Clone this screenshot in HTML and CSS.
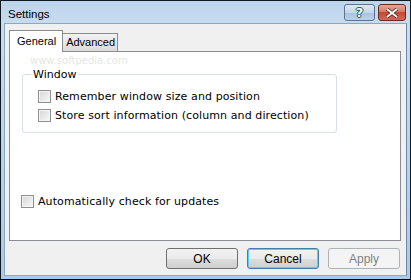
FILE: index.html
```html
<!DOCTYPE html>
<html lang="en">
<head>
    <meta charset="UTF-8">
    <title>Settings</title>
    <link rel="stylesheet" href="styles.css">
</head>
<body>
    <div class="window">
        <div class="titlebar">
            <span class="title">Settings</span>
            <div class="caption-btns">
                <div class="cap-btn help">?</div>
                <div class="cap-btn close">
                    <svg width="14" height="10" viewBox="0 0 14 10">
                        <path d="M2 1 L12 9 M12 1 L2 9" stroke="#4a1a12" stroke-width="3.4"/>
                        <path d="M2 1 L12 9 M12 1 L2 9" stroke="#fff" stroke-width="2"/>
                    </svg>
                </div>
            </div>
        </div>

        <div class="client">
            <div class="tabs">
                <div class="tab active">General</div>
                <div class="tab">Advanced</div>
            </div>
            <div class="panel">
                <div class="watermark">www.softpedia.com</div>
                <fieldset class="group">
                    <legend>Window</legend>
                    <label class="check"><span class="box"></span>Remember window size and position</label>
                    <label class="check"><span class="box"></span>Store sort information (column and direction)</label>
                </fieldset>
                <label class="check updates"><span class="box"></span>Automatically check for updates</label>
            </div>
            <div class="buttons">
                <button class="btn">OK</button>
                <button class="btn focus">Cancel</button>
                <button class="btn disabled">Apply</button>
            </div>
        </div>
    </div>
</body>
</html>
```

FILE: styles.css
```css
* {
    margin: 0;
    padding: 0;
    box-sizing: border-box;
}
body {
    width: 411px;
    height: 280px;
    background: #000;
    overflow: hidden;
    font-family: "Liberation Sans", Arial, sans-serif;
}
.window {
    width: 411px;
    height: 280px;
    border: 1px solid #101820;
    border-bottom-color: #000;
    background: linear-gradient(to bottom, #bcd4ec 0%, #c8dcf0 8%, #a8cbe8 100%);
    display: flex;
    flex-direction: column;
    padding: 0 3px 3px 3px;
}
.titlebar {
    height: 22px;
    display: flex;
    align-items: center;
    justify-content: space-between;
}
.title {
    font-size: 11.5px;
    color: #000;
    padding-left: 4px;
    padding-top: 3px;
}
.caption-btns {
    display: flex;
    gap: 3px;
    padding-top: 1px;
    margin-right: 1px;
}
.cap-btn {
    height: 17px;
    border-radius: 3px;
    border: 1px solid #5d7390;
    display: flex;
    align-items: center;
    justify-content: center;
}
.help {
    width: 31px;
    background: linear-gradient(to bottom, #dde8f4 0%, #c4d7ec 50%, #a9c3e0 51%, #b9d1ea 100%);
    font-family: "DejaVu Sans", sans-serif;
    font-size: 13px;
    font-weight: bold;
    color: #fff;
    text-shadow: 0 0 1px #3a4a60, 1px 0 0 #3a4a60, -1px 0 0 #3a4a60, 0 1px 0 #3a4a60, 0 -1px 0 #3a4a60;
}
.close {
    width: 28px;
    border-color: #6b2a20;
    background: linear-gradient(to bottom, #e6a898 0%, #d47a66 45%, #c44a32 50%, #d06a50 100%);
}
.client {
    flex: 1;
    background: #f0f0f0;
    border: 1px solid #8aa8c4;
    border-right-color: #6d88a8;
    padding: 6px 5px 0 4px;
    display: flex;
    flex-direction: column;
}
.tabs {
    display: flex;
    align-items: flex-end;
    height: 21px;
    position: relative;
    z-index: 1;
}
.tab {
    font-size: 11px;
    color: #000;
    border: 1px solid #898c95;
    border-bottom: none;
    background: linear-gradient(to bottom, #f2f2f2, #dcdcdc);
    height: 18px;
    padding: 2px 2px 0 3px;
    margin-left: -1px;
}
.tab.active {
    background: #fff;
    height: 22px;
    margin-left: 0;
    margin-bottom: -1px;
    padding: 4px 6px 0 7px;
    border-color: #898c95;
}
.panel {
    background: #fff;
    border: 1px solid #898c95;
    height: 190px;
    padding: 0 0 0 12px;
    position: relative;
}
.watermark {
    position: absolute;
    left: 20px;
    top: 3px;
    font-family: "DejaVu Sans", sans-serif;
    font-size: 10px;
    color: #e6e6e6;
}
.group {
    margin-top: 16px;
    width: 315px;
    height: 65px;
    border: 1px solid #d5dfe5;
    border-radius: 3px;
    padding: 6px 0 0 15px;
    font-family: "DejaVu Sans", Verdana, sans-serif;
    font-size: 11px;
}
.group legend {
    margin-left: -7px;
    padding: 0 2px;
    color: #000;
}
.check {
    display: flex;
    align-items: center;
    gap: 4px;
    height: 19px;
    font-family: "DejaVu Sans", Verdana, sans-serif;
    font-size: 11px;
    letter-spacing: 0.1px;
    color: #000;
}
.box {
    width: 13px;
    height: 13px;
    border: 1px solid #8e8f8f;
    background: linear-gradient(135deg, #d6d6d6, #f8f8f8);
    box-shadow: inset 0 0 0 1px #f4f4f4;
    flex-shrink: 0;
}
.updates {
    margin-top: 59px;
    margin-left: -1px;
}
.buttons {
    display: flex;
    justify-content: flex-end;
    gap: 9px;
    padding-top: 7px;
    padding-right: 1px;
}
.btn {
    width: 72px;
    height: 21px;
    border: 1px solid #707070;
    border-radius: 3px;
    background: linear-gradient(to bottom, #f2f2f2 0%, #ebebeb 50%, #dddddd 51%, #cfcfcf 100%);
    font-family: "Liberation Sans", Arial, sans-serif;
    font-size: 12px;
    color: #000;
}
.btn.focus {
    border-color: #3c7fb1;
    box-shadow: inset 0 0 0 1px #48d7fb;
}
.btn.disabled {
    border-color: #adb2b5;
    background: #f4f4f4;
    color: #838383;
}
```
